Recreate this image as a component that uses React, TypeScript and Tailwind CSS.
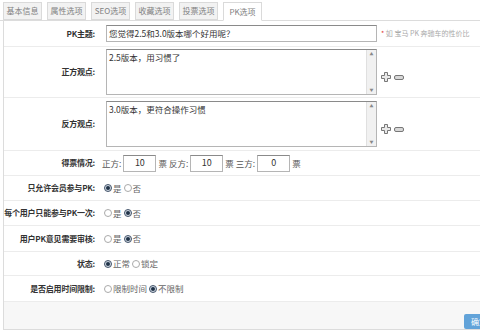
import React from "react";

const tabs = ["基本信息", "属性选项", "SEO选项", "收藏选项", "投票选项", "PK选项"];

function Row({ label, h, children }: { label: string; h: string; children: React.ReactNode }) {
    return (
        <div className={`flex items-center border-b border-[#ececec] ${h}`}>
            <div className="w-[94px] shrink-0 flex justify-end pr-[3px] font-bold text-[#333] text-[8px] whitespace-nowrap tracking-[-0.2px]">{label}:</div>
            <div className="flex items-center flex-1 pl-[4px] text-[#555]">{children}</div>
        </div>
    );
}

function Radio({ checked }: { checked?: boolean }) {
    return (
        <span className={`inline-flex items-center justify-center w-[8px] h-[8px] rounded-full border ${checked ? "border-[#44546a] bg-[#cfd8e2]" : "border-[#aaa] bg-white"}`}>
            {checked && <span className="w-[4px] h-[4px] rounded-full bg-[#1f3247]" />}
        </span>
    );
}

function Choice({ items, value }: { items: string[]; value: number }) {
    return (
        <div className="flex items-center gap-[2px] pl-[2px]">
            {items.map((it, i) => (
                <label key={it} className="flex items-center gap-[1px] text-[#666]">
                    <Radio checked={i === value} />
                    <span>{it}</span>
                </label>
            ))}
        </div>
    );
}

function PlusMinus() {
    return (
        <div className="flex items-center gap-[3px] ml-[4px] mt-[10px]">
            <svg width="10" height="10" viewBox="0 0 10 10">
                <path d="M3.5 0.5h3v3h3v3h-3v3h-3v-3h-3v-3h3z" fill="#e8e8e8" stroke="#777" strokeWidth="1" strokeLinejoin="round" />
            </svg>
            <svg width="10" height="5" viewBox="0 0 10 5">
                <rect x="0.5" y="0.5" width="9" height="4" rx="1.5" fill="#d8d8d8" stroke="#777" strokeWidth="1" />
            </svg>
        </div>
    );
}

function FakeTextarea({ text }: { text: string }) {
    return (
        <div className="ml-[4px] w-[271px] h-[46px] flex border border-[#b5b5b5] border-t-[#8a8a8a] bg-white">
            <div className="flex-1 px-[2px] pt-[1px] text-[#333] leading-[12px]">{text}</div>
            <div className="w-[10px] bg-[#f1f1f1] border-l border-[#e0e0e0] flex flex-col justify-between items-center text-[4px] text-[#888] leading-[8px]">
                <span>▲</span>
                <span>▼</span>
            </div>
        </div>
    );
}

function NumBox({ v }: { v: string }) {
    return (
        <div className="mx-[2px] w-[33px] h-[17px] flex items-center justify-center border border-[#b5b5b5] border-t-[#8a8a8a] text-[#333] text-[9px]">
            {v}
        </div>
    );
}

export default function App() {
    return (
        <div className="w-[480px] h-[334px] overflow-hidden bg-white text-[8.5px] font-['Noto_Sans_CJK_SC',sans-serif]">
            {/* tabs */}
            <div className="flex items-end gap-[5px] pl-[3px] h-[21px] border-b border-[#dcdcdc]">
                {tabs.map((t, i) => (
                    <div
                        key={t}
                        className={`w-[39px] flex items-center justify-center border border-[#dadada] text-[#808080] text-[8px] ${i === 5 ? "h-[19px] bg-white border-b-white -mb-px" : "h-[18px] bg-[#f2f2f2]"}`}
                    >
                        {t}
                    </div>
                ))}
            </div>

            <div className="ml-[3px] w-[517px] border-l border-[#dcdcdc]">
                <Row label="PK主题" h="h-[26px]">
                    <div className="ml-[4px] w-[271px] h-[17px] flex items-center px-[2px] border border-[#b5b5b5] border-t-[#8a8a8a] text-[#333]">
                        您觉得2.5和3.0版本哪个好用呢？
                    </div>
                    <span className="ml-[4px] text-[7px] text-[#aaa] whitespace-nowrap">
                        <span className="text-[#e03030]">*</span> 如 宝马 PK 奔驰车的性价比
                    </span>
                </Row>
                <Row label="正方观点" h="h-[51px]">
                    <FakeTextarea text="2.5版本，用习惯了" />
                    <PlusMinus />
                </Row>
                <Row label="反方观点" h="h-[53px]">
                    <FakeTextarea text="3.0版本，更符合操作习惯" />
                    <PlusMinus />
                </Row>
                <Row label="得票情况" h="h-[25px]">
                    <span>正方:</span>
                    <NumBox v="10" />
                    <span>票</span>
                    <span className="ml-[2px]">反方:</span>
                    <NumBox v="10" />
                    <span>票</span>
                    <span className="ml-[2px]">三方:</span>
                    <NumBox v="0" />
                    <span>票</span>
                </Row>
                <Row label="只允许会员参与PK" h="h-[25px]">
                    <Choice items={["是", "否"]} value={0} />
                </Row>
                <Row label="每个用户只能参与PK一次" h="h-[25px]">
                    <Choice items={["是", "否"]} value={1} />
                </Row>
                <Row label="用户PK意见需要审核" h="h-[26px]">
                    <Choice items={["是", "否"]} value={1} />
                </Row>
                <Row label="状态" h="h-[24px]">
                    <Choice items={["正常", "锁定"]} value={0} />
                </Row>
                <Row label="是否启用时间限制" h="h-[26px]">
                    <Choice items={["限制时间", "不限制"]} value={1} />
                </Row>

                <div className="h-[28px] flex items-end justify-end pr-[10px] bg-[#f7f7f7] border-b border-[#dcdcdc]">
                    <button className="w-[46px] h-[15px] bg-[#62a3d9] text-white text-[8px] rounded-[2px]">确定提交</button>
                </div>
            </div>
        </div>
    );
}
